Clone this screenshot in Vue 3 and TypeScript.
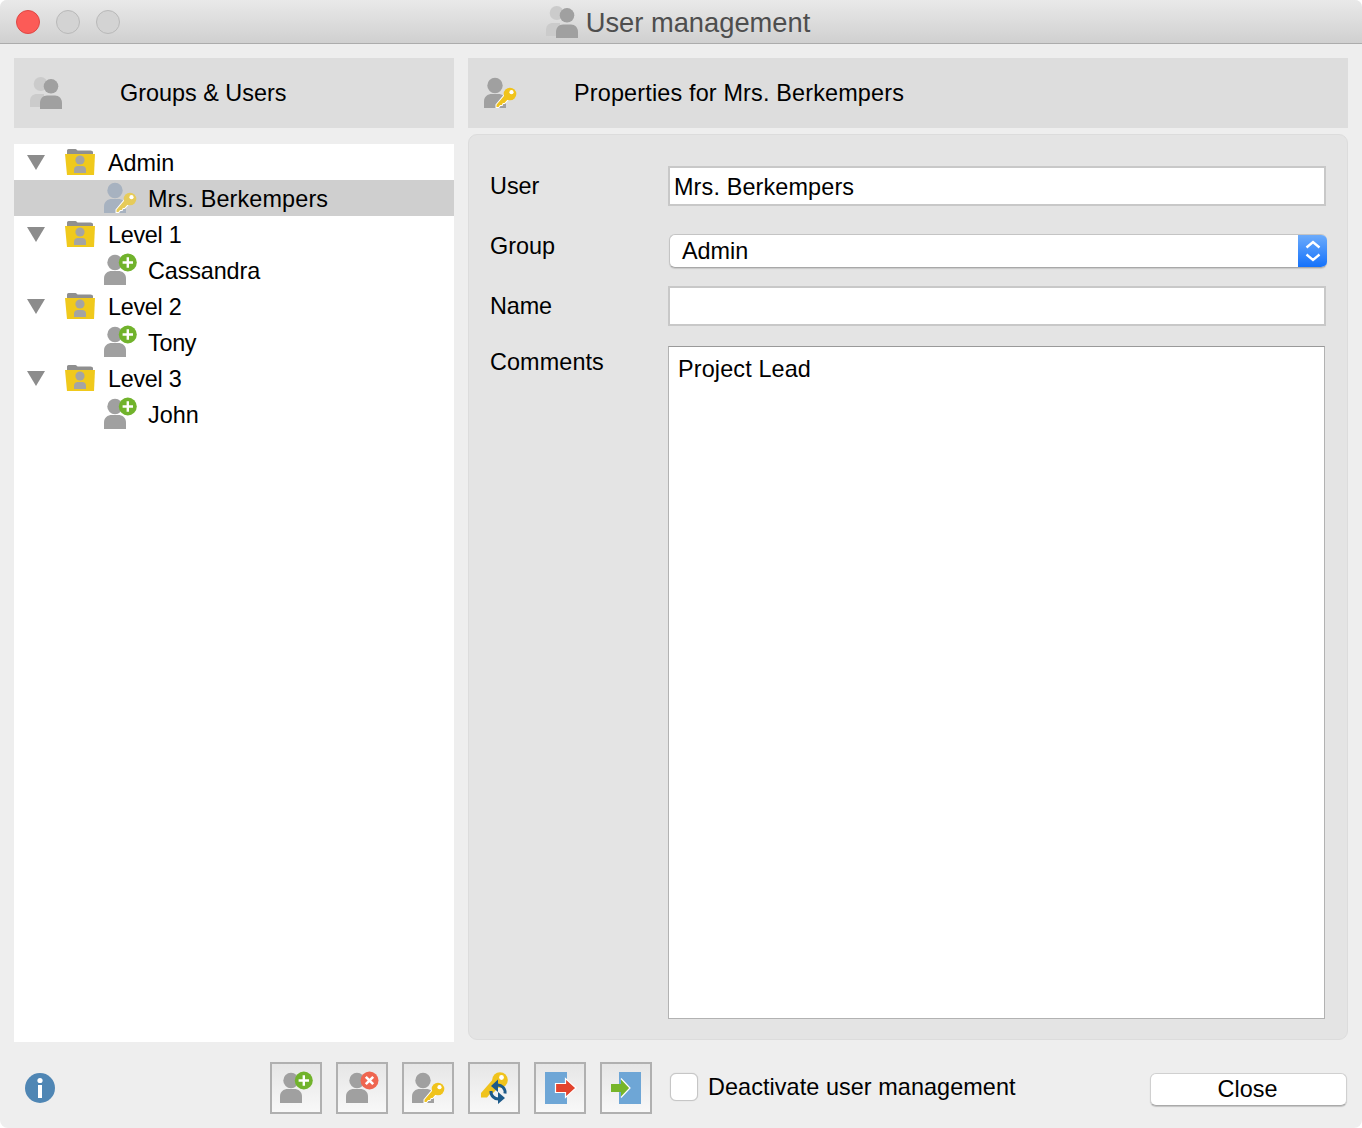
<script setup lang="ts">
interface TreeGroup { name: string; user: string; selected?: boolean; nameClass?: string; userClass?: string }
const groups: TreeGroup[] = [
  { name: 'Admin', user: 'Mrs. Berkempers', selected: true, userClass: 'wide' },
  { name: 'Level 1', user: 'Cassandra', nameClass: 'tight', userClass: 'snug' },
  { name: 'Level 2', user: 'Tony', nameClass: 'tight', userClass: 'tight' },
  { name: 'Level 3', user: 'John', nameClass: 'tight' },
]
</script>

<template>
  <div class="window">
    <svg class="defs" aria-hidden="true">
      <defs>
        <symbol id="person" viewBox="0 0 32 32" overflow="visible">
          <circle cx="11" cy="8.5" r="7.7" />
          <path d="M0 31v-6.5C0 19.5 3.5 17 8 17h6c4.500 0 8 2.500 8 7.500V31z" />
        </symbol>
        <symbol id="group" viewBox="0 0 32 32" overflow="visible">
          <g fill="#cbcbcb">
            <circle cx="10.700" cy="7" r="7" />
            <path d="M0 30v-6c0-4.500 3-7 7-7h7v13z" />
          </g>
          <g fill="#a0a0a0">
            <circle cx="21" cy="9.300" r="7.300" />
            <path d="M10 32v-6c0-4.500 3-7.500 7-7.500h8c4 0 7 3 7 7.500v6z" />
          </g>
        </symbol>
        <symbol id="key" viewBox="0 0 32 32" overflow="visible">
          <path class="key-edge" d="M22 15 11.500 27.500V31h3.500l1.500-2h2l.8-2h1.700l4-4.500z" />
          <path d="M22.500 16 12.500 27.800V30h2l1.500-2h2l.8-2h1.700l4.500-5z" fill="currentColor" />
          <circle cx="26" cy="17" r="6.300" fill="currentColor" />
          <circle cx="27.500" cy="15.200" r="2.100" fill="#fff" />
        </symbol>
        <symbol id="plus" viewBox="0 0 32 32" overflow="visible">
          <circle cx="23.800" cy="8.500" r="9" fill="#71b32c" />
          <path d="M23.800 3.300v10.400M18.600 8.500h10.400" stroke="#fff" stroke-width="2.400" fill="none" />
        </symbol>
        <symbol id="cross" viewBox="0 0 32 32" overflow="visible">
          <circle cx="23.500" cy="8.500" r="9" fill="#ef6650" />
          <path d="m19.800 4.800 7.400 7.400m0-7.400-7.400 7.400" stroke="#fff" stroke-width="2.600" fill="none" />
        </symbol>
      </defs>
    </svg>

    <header class="titlebar">
      <div class="lights">
        <span class="light red"></span>
        <span class="light"></span>
        <span class="light"></span>
      </div>
      <div class="title">
        <svg class="ic"><use href="#group" /></svg>
        <span class="title-text">User management</span>
      </div>
    </header>

    <main class="main">
      <section class="left">
        <div class="head">
          <svg class="ic head-ic"><use href="#group" /></svg>
          <span>Groups &amp; Users</span>
        </div>
        <div class="tree">
          <template v-for="g in groups" :key="g.name">
            <div class="row">
              <span class="caret"></span>
              <svg class="folder" width="30" height="26" viewBox="0 0 30 26">
                <path d="M2 5V1.500Q2 0 3.500 0h7q1 0 2 1.500h13Q28 1.500 28 3v2z" fill="#8f8f8f" />
                <path d="M0 5h30l-1 21H2z" fill="#f0c91c" />
                <circle cx="15" cy="11" r="4.600" fill="#a4a4a4" />
                <path d="M9 24v-3q0-4 4-4h4q4 0 4 4v3z" fill="#a4a4a4" />
              </svg>
              <span class="group-name" :class="g.nameClass">{{ g.name }}</span>
            </div>
            <div class="row child" :class="{ selected: g.selected }">
              <svg v-if="g.selected" class="ic person muted" width="32" height="32">
                <use href="#person" />
                <use href="#key" />
              </svg>
              <svg v-else class="ic person" width="32" height="32">
                <use href="#person" />
                <use href="#plus" />
              </svg>
              <span class="user-name" :class="g.userClass">{{ g.user }}</span>
            </div>
          </template>
        </div>
      </section>

      <section class="right">
        <div class="head head-right">
          <svg class="ic head-ic person"><use href="#person" /><use href="#key" /></svg>
          <span class="props">Properties for Mrs. Berkempers</span>
        </div>
        <div class="panel">
          <div class="field f-user">
            <label class="lab">User</label>
            <div class="input"><span class="wide">Mrs. Berkempers</span></div>
          </div>
          <div class="field f-group">
            <label class="lab">Group</label>
            <div class="select">
              <span class="select-text">Admin</span>
              <span class="stepper">
                <svg width="16" height="24" viewBox="0 0 16 24">
                  <path d="m1.500 8.500 6.500-5.500 6.500 5.500M1.500 15.500l6.500 5.500 6.500-5.500" fill="none" stroke="#fff" stroke-width="2.400" />
                </svg>
              </span>
            </div>
          </div>
          <div class="field f-name">
            <label class="lab snug">Name</label>
            <div class="input"></div>
          </div>
          <div class="field f-comments">
            <label class="lab">Comments</label>
            <div class="textarea"><span class="wide">Project Lead</span></div>
          </div>
        </div>
      </section>
    </main>

    <footer class="footer">
      <svg class="info" width="30" height="30" viewBox="0 0 30 30">
        <circle cx="15" cy="15" r="15" fill="#4f86b4" />
        <circle cx="15" cy="7.500" r="2.600" fill="#fff" />
        <rect x="13" y="12" width="4" height="13" fill="#fff" />
      </svg>
      <div class="tools">
        <button class="tool">
          <svg class="ic person tool-ic"><use href="#person" /><use href="#plus" /></svg>
        </button>
        <button class="tool">
          <svg class="ic person tool-ic"><use href="#person" /><use href="#cross" /></svg>
        </button>
        <button class="tool">
          <svg class="ic person tool-ic"><use href="#person" /><use href="#key" /></svg>
        </button>
        <button class="tool">
          <svg width="48" height="48" viewBox="0 0 48 48">
            <path d="M25 13 11 29v4.500h6l2.500-3 3.500-1.500 9-9z" fill="#f0c31c" />
            <circle cx="30" cy="16" r="7.800" fill="#f0c31c" />
            <circle cx="31.500" cy="13.500" r="2.400" fill="#fff" />
            <path d="M35 29.500A7.500 7.500 0 0 0 27 21M21 27a7.500 7.500 0 0 0 8 8" fill="none" stroke="#1d5a8a" stroke-width="3" />
            <path d="M28 15.500 21 22l7 6zM28 28l7 6-7 6z" fill="#1d5a8a" />
          </svg>
        </button>
        <button class="tool">
          <svg width="48" height="48" viewBox="0 0 48 48">
            <rect x="9" y="8" width="22" height="32" fill="#6ea6d6" />
            <path d="M19.500 19.500h10V14.500L40 24 29.500 33.500v-5h-10z" fill="#e2432d" stroke="#fff" stroke-width="1.200" />
          </svg>
        </button>
        <button class="tool">
          <svg width="48" height="48" viewBox="0 0 48 48">
            <rect x="17" y="8" width="22" height="32" fill="#6ea6d6" />
            <path d="M9 20h10v-5.500L28 24l-9 9.500V28H9z" fill="#76b52a" />
            <path d="M19 14.500 28 24l-9 9.500" fill="none" stroke="#fff" stroke-width="1.200" />
          </svg>
        </button>
      </div>
      <label class="check">
        <span class="box"></span>
        <span class="check-text">Deactivate user management</span>
      </label>
      <button class="close">Close</button>
    </footer>
  </div>
</template>

<style scoped>
.window {
  width: 1362px;
  height: 1128px;
  display: flex;
  flex-direction: column;
  background: #eeeeee;
  border-radius: 7px 7px 8px 8px;
  overflow: hidden;
  font-family: "Liberation Sans", Arial, sans-serif;
  font-size: 23.4px;
  line-height: 28px;
  color: #000;
}
.defs {
  position: absolute;
  width: 0;
  height: 0;
}
.ic {
  width: 32px;
  height: 32px;
  overflow: visible;
  flex: none;
  display: block;
}
.person {
  fill: #a0a0a0;
  color: #f0c31c;
}
.muted {
  fill: #a7b2c0;
  color: #e6cb5a;
}
.wide {
  letter-spacing: 0.14px;
}
.snug {
  letter-spacing: -0.12px;
}
.tight {
  letter-spacing: -0.28px;
}
.props {
  letter-spacing: 0.17px;
}
.check-text {
  letter-spacing: 0.08px;
}
.titlebar {
  position: relative;
  flex: none;
  height: 44px;
  box-sizing: border-box;
  border-bottom: 1px solid #acacac;
  background: linear-gradient(#e9e9e9, #d0d0d0);
  display: flex;
  align-items: center;
  justify-content: center;
}
.lights {
  position: absolute;
  left: 16px;
  top: 10px;
  display: flex;
  gap: 16px;
}
.light {
  width: 24px;
  height: 24px;
  box-sizing: border-box;
  border-radius: 50%;
  border: 1px solid #b9b9b9;
  background: #d3d3d3;
}
.light.red {
  background: #fc5b57;
  border-color: #df4744;
}
.title {
  display: flex;
  align-items: center;
  gap: 8px;
  margin-left: -6px;
  color: #4e4e4e;
  font-size: 27.3px;
}
.title-text {
  padding-top: 2px;
}
.main {
  flex: none;
  height: 998px;
  box-sizing: border-box;
  padding: 14px 14px 0;
  display: flex;
  gap: 14px;
}
.left {
  width: 440px;
  display: flex;
  flex-direction: column;
  gap: 16px;
}
.right {
  width: 880px;
  display: flex;
  flex-direction: column;
  gap: 6px;
}
.head {
  flex: none;
  height: 70px;
  background: #dddddd;
  display: flex;
  align-items: center;
  padding-left: 16px;
  box-sizing: border-box;
}
.head-ic {
  margin-right: 58px;
}
.tree {
  flex: 1;
  background: #fff;
}
.row {
  height: 36px;
  display: flex;
  align-items: center;
}
.caret {
  width: 0;
  height: 0;
  margin-left: 13px;
  margin-right: 20px;
  margin-top: 1px;
  border-left: 9px solid transparent;
  border-right: 9px solid transparent;
  border-top: 15px solid #8c8c8c;
}
.folder {
  flex: none;
}
.group-name {
  margin-left: 13px;
  padding-top: 2px;
}
.child {
  padding-left: 90px;
}
.selected {
  background: #cfcfcf;
}
.user-name {
  margin-left: 12px;
  padding-top: 2px;
}
.panel {
  flex: none;
  height: 906px;
  box-sizing: border-box;
  background: #e4e4e4;
  border: 1px solid #dcdcdc;
  border-radius: 9px;
  padding: 31px 20px 0 21px;
}
.field {
  display: flex;
  align-items: flex-start;
}
.lab {
  width: 178px;
  flex: none;
}
.f-user .lab, .f-name .lab {
  margin-top: 6px;
}
.f-group {
  margin-top: 28px;
}
.f-group .lab {
  margin-top: -2px;
}
.f-name {
  margin-top: 18px;
}
.f-comments {
  margin-top: 20px;
}
.f-comments .lab {
  margin-top: 2px;
  letter-spacing: 0.1px;
}
.input {
  width: 658px;
  height: 40px;
  box-sizing: border-box;
  background: #fff;
  border: 2px solid #c8c8c8;
  padding: 5px 4px;
}
.select {
  width: 658px;
  height: 34px;
  margin-left: 1px;
  box-sizing: border-box;
  display: flex;
  align-items: center;
  justify-content: space-between;
  background: #fff;
  border-radius: 6px;
  border: 1px solid #c4c4c4;
  border-right: none;
  border-bottom-color: #a8a8a8;
  box-shadow: 0 1px 1px rgba(0, 0, 0, 0.12);
  overflow: hidden;
}
.select-text {
  margin-left: 12px;
}
.stepper {
  width: 29px;
  height: 34px;
  background: linear-gradient(#6fadfb, #1270fb);
  display: flex;
  align-items: center;
  justify-content: center;
}
.textarea {
  width: 657px;
  height: 673px;
  box-sizing: border-box;
  background: #fff;
  border: 1px solid #b2b2b2;
  border-top-color: #999;
  padding: 8px 9px;
}
.footer {
  flex: 1;
  box-sizing: border-box;
  padding: 20px 15px 14px 25px;
  display: flex;
  align-items: center;
}
.info {
  flex: none;
}
.tools {
  margin-left: 215px;
  display: flex;
  gap: 14px;
}
.tool {
  width: 52px;
  height: 52px;
  padding: 0;
  box-sizing: border-box;
  border: 2px solid #b0b0b0;
  background: linear-gradient(#e6e6e6, #f8f8f8);
  display: flex;
  align-items: center;
  justify-content: center;
}
.tool-ic {
  margin-left: 8px;
  margin-top: -1px;
  margin-right: 8px;
}
.check {
  margin-left: 18px;
  display: flex;
  align-items: center;
  gap: 10px;
  margin-top: -3px;
}
.box {
  width: 28px;
  height: 28px;
  box-sizing: border-box;
  background: #fff;
  border: 1px solid #c6c6c6;
  border-radius: 6px;
  box-shadow: 0 0 1px rgba(0, 0, 0, 0.2);
}
.close {
  margin-left: auto;
  margin-top: 3px;
  width: 197px;
  height: 33px;
  padding: 0 2px 2px 0;
  box-sizing: border-box;
  background: #fff;
  border: 1px solid #d0d0d0;
  border-bottom-color: #aaa;
  border-radius: 6px;
  box-shadow: 0 1px 1px rgba(0, 0, 0, 0.18);
  font: inherit;
  color: #000;
}
</style>

<style>
#person, #group { overflow: visible; }
.key-edge { fill: #fff; }
html, body { background: #fff; }
</style>
